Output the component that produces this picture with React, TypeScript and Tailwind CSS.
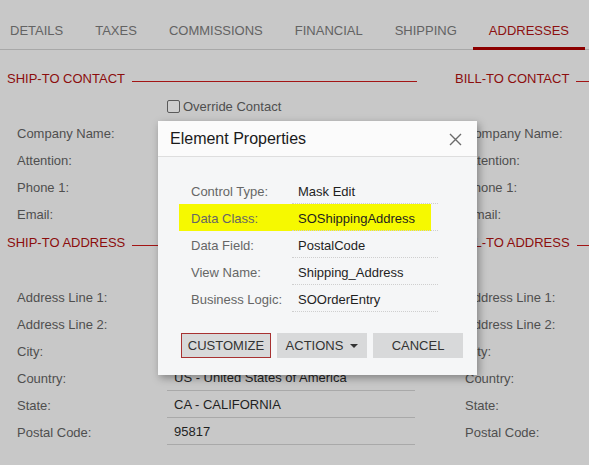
const tabs = ['DETAILS', 'TAXES', 'COMMISSIONS', 'FINANCIAL', 'SHIPPING', 'ADDRESSES'];

const contactRows = ['Company Name:', 'Attention:', 'Phone 1:', 'Email:'];
const addressRows: Array<[string, string]> = [
  ['Address Line 1:', ''],
  ['Address Line 2:', ''],
  ['City:', ''],
  ['Country:', 'US - United States of America'],
  ['State:', 'CA - CALIFORNIA'],
  ['Postal Code:', '95817'],
];

const props: Array<[string, string]> = [
  ['Control Type:', 'Mask Edit'],
  ['Data Class:', 'SOShippingAddress'],
  ['Data Field:', 'PostalCode'],
  ['View Name:', 'Shipping_Address'],
  ['Business Logic:', 'SOOrderEntry'],
];

function SectionHeader({ title }: { title: string }) {
  return (
    <div className="flex h-[28px] items-center gap-[7px] pt-[2px]">
      <span className="whitespace-nowrap text-[13px] text-[#8c0d0d]">{title}</span>
      <span className="mt-[5px] h-px flex-1 bg-[#a31515]" />
    </div>
  );
}

function Field({ label, value, withLine }: { label: string; value?: string; withLine?: boolean }) {
  return (
    <div className="flex h-[27px] items-stretch">
      <div className="flex w-[160px] items-center pl-[10px] pt-[2px] text-[13px] text-[#4f4f4f]">{label}</div>
      <div className={`flex w-[248px] items-center pl-[7px] pt-[2px] text-[13px] text-[#1f1f1f] ${withLine ? 'border-b border-[#a9a9a9]' : ''}`}>
        {value}
      </div>
    </div>
  );
}

function Checkbox({ label }: { label: string }) {
  return (
    <div className="flex h-[27px] items-center pl-[160px] pt-[2px]">
      <span className="h-[13px] w-[13px] rounded-[2px] border border-[#5a5a5a] bg-[#cfcfcf]" />
      <span className="ml-[3px] text-[13px] text-[#4f4f4f]">{label}</span>
    </div>
  );
}

// the right column is cut by the window edge, so its inputs are left out
function Column({ contact, address, inputs }: { contact: string; address: string; inputs: boolean }) {
  return (
    <div className="w-[410px] shrink-0">
      <SectionHeader title={contact} />
      {inputs ? <Checkbox label="Override Contact" /> : <div className="h-[27px]" />}
      {contactRows.map((r) => (
        <Field key={r} label={r} />
      ))}
      <div className="h-px" />
      <SectionHeader title={address} />
      {/* override address row sits under the dialog */}
      <div className="h-[27px]" />
      {addressRows.map(([l, v]) => (
        <Field key={l} label={l} value={inputs ? v : ''} withLine={v !== ''} />
      ))}
    </div>
  );
}

export default function App() {
  return (
    <div
      className="relative h-[465px] w-[589px] overflow-hidden bg-[#c8c8c8]"
      style={{ fontFamily: '"Liberation Sans", Arial, sans-serif' }}
    >
      <div className="flex h-[50px] border-b border-[#a8a8a8]">
        <div className="-ml-[6px] flex">
          {tabs.map((t) => (
            <div
              key={t}
              className={`flex h-[50px] items-center px-[16px] text-[13px] ${
                t === 'ADDRESSES' ? 'border-b-[3px] border-[#8c0000] pt-[14px] text-[#8c1010]' : 'pt-[11px] text-[#636363]'
              }`}
            >
              {t}
            </div>
          ))}
        </div>
      </div>

      <div className="mt-[14px] flex gap-[38px] pl-[7px]">
        <Column contact="SHIP-TO CONTACT" address="SHIP-TO ADDRESS" inputs />
        <Column contact="BILL-TO CONTACT" address="BILL-TO ADDRESS" inputs={false} />
      </div>

      <div className="absolute left-[158px] top-[121px] w-[319px] bg-[#f5f6f7] shadow-[2px_3px_8px_rgba(0,0,0,0.35)]">
        <div className="flex h-[36px] items-center justify-between border-b border-[#dedede] bg-[#fbfbfb] pl-[12px] pr-[15px] pt-px">
          <span className="text-[16px] text-[#1a1a1a]">Element Properties</span>
          <svg width="13" height="13" viewBox="0 0 13 13">
            <path d="M1 1L12 12M12 1L1 12" stroke="#6b6b6b" strokeWidth="1.4" />
          </svg>
        </div>
        <div className="pt-[20px] pl-[21px]">
          {props.map(([l, v]) => (
            <div key={l} className="relative flex h-[27px] w-[259px]">
              {l === 'Data Class:' && <span className="absolute inset-y-0 left-0 right-[7px] bg-[#f6f900]" />}
              <div className="relative flex w-[113px] items-center pl-[12px] pt-[3px] text-[13px] text-[#666]">{l}</div>
              <div className="relative flex w-[146px] items-center border-b border-dotted border-[#cfcfcf] pl-[6px] pt-[3px] text-[13px] text-[#1f1f1f]">
                {v}
              </div>
            </div>
          ))}
        </div>
        <div className="flex gap-[6px] pb-[17px] pl-[23px] pt-[21px]">
          <button className="h-[25px] w-[90px] border border-[#a83232] bg-[#d8d9da] text-[13px] text-[#333]">CUSTOMIZE</button>
          <button className="flex h-[25px] w-[90px] items-center justify-center gap-[7px] bg-[#d8d9da] text-[13px] text-[#333]">
            ACTIONS
            <span className="h-0 w-0 border-x-[4px] border-t-[4px] border-x-transparent border-t-[#333]" />
          </button>
          <button className="h-[25px] w-[90px] bg-[#d8d9da] text-[13px] text-[#333]">CANCEL</button>
        </div>
      </div>
    </div>
  );
}
